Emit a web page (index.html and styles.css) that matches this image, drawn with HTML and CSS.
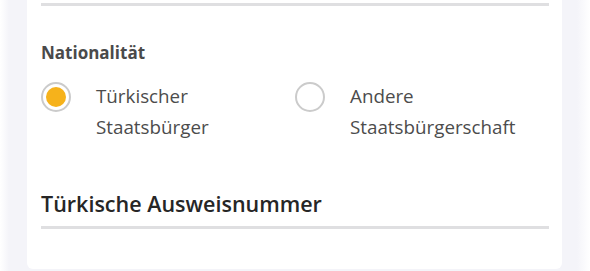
FILE: index.html
```html
<!DOCTYPE html>
<html>
<head>
	<meta charset="utf-8">
	<title>Nationalität</title>
	<link rel="stylesheet" href="styles.css">
</head>
<body>
	<div class="card">
		<div class="line"></div>
		<div class="label">Nationalität</div>
		<div class="choices">
			<label class="choice">
				<span class="radio checked"></span>
				<span class="text">Türkischer Staatsbürger</span>
			</label>
			<label class="choice">
				<span class="radio"></span>
				<span class="text">Andere Staatsbürgerschaft</span>
			</label>
		</div>
		<div class="field">Türkische Ausweisnummer</div>
		<div class="line"></div>
	</div>
</body>
</html>
```

FILE: styles.css
```css
html, body {
	margin: 0;
	padding: 0;
	height: 271px;
	overflow: hidden;
}
body {
	background: linear-gradient(90deg, #fff 0, #f4f4f9 9px, #f4f4f9 577px, #fff 590px);
	font-family: "Open Sans", "Liberation Sans", sans-serif;
}
.card {
	margin: 0 28px 0 27px;
	padding: 3px 13px 40px 14px;
	background: #fff;
	border-radius: 0 0 6px 6px;
}
.line {
	height: 3px;
	background: #dfdfe1;
}
.label {
	margin-top: 35px;
	font-size: 17px;
	line-height: 23px;
	font-weight: 700;
	color: #4a4a4a;
}
.choices {
	display: grid;
	grid-template-columns: 1fr 1fr;
	margin-top: 17px;
}
.choice {
	display: flex;
	align-items: flex-start;
	gap: 25px;
}
.radio {
	flex: none;
	box-sizing: border-box;
	width: 30px;
	height: 30px;
	margin-top: 1px;
	border: 2.5px solid #cbcbcb;
	border-radius: 50%;
	background: #fff;
}
.radio.checked {
	padding: 3px;
	background: #f6b21b;
	background-clip: content-box;
}
.text {
	max-width: 180px;
	font-size: 18.8px;
	line-height: 31px;
	color: #4c4c4c;
}
.field {
	margin-top: 46px;
	margin-bottom: 7px;
	font-size: 21.5px;
	line-height: 30px;
	font-weight: 600;
	color: #262626;
}
```
